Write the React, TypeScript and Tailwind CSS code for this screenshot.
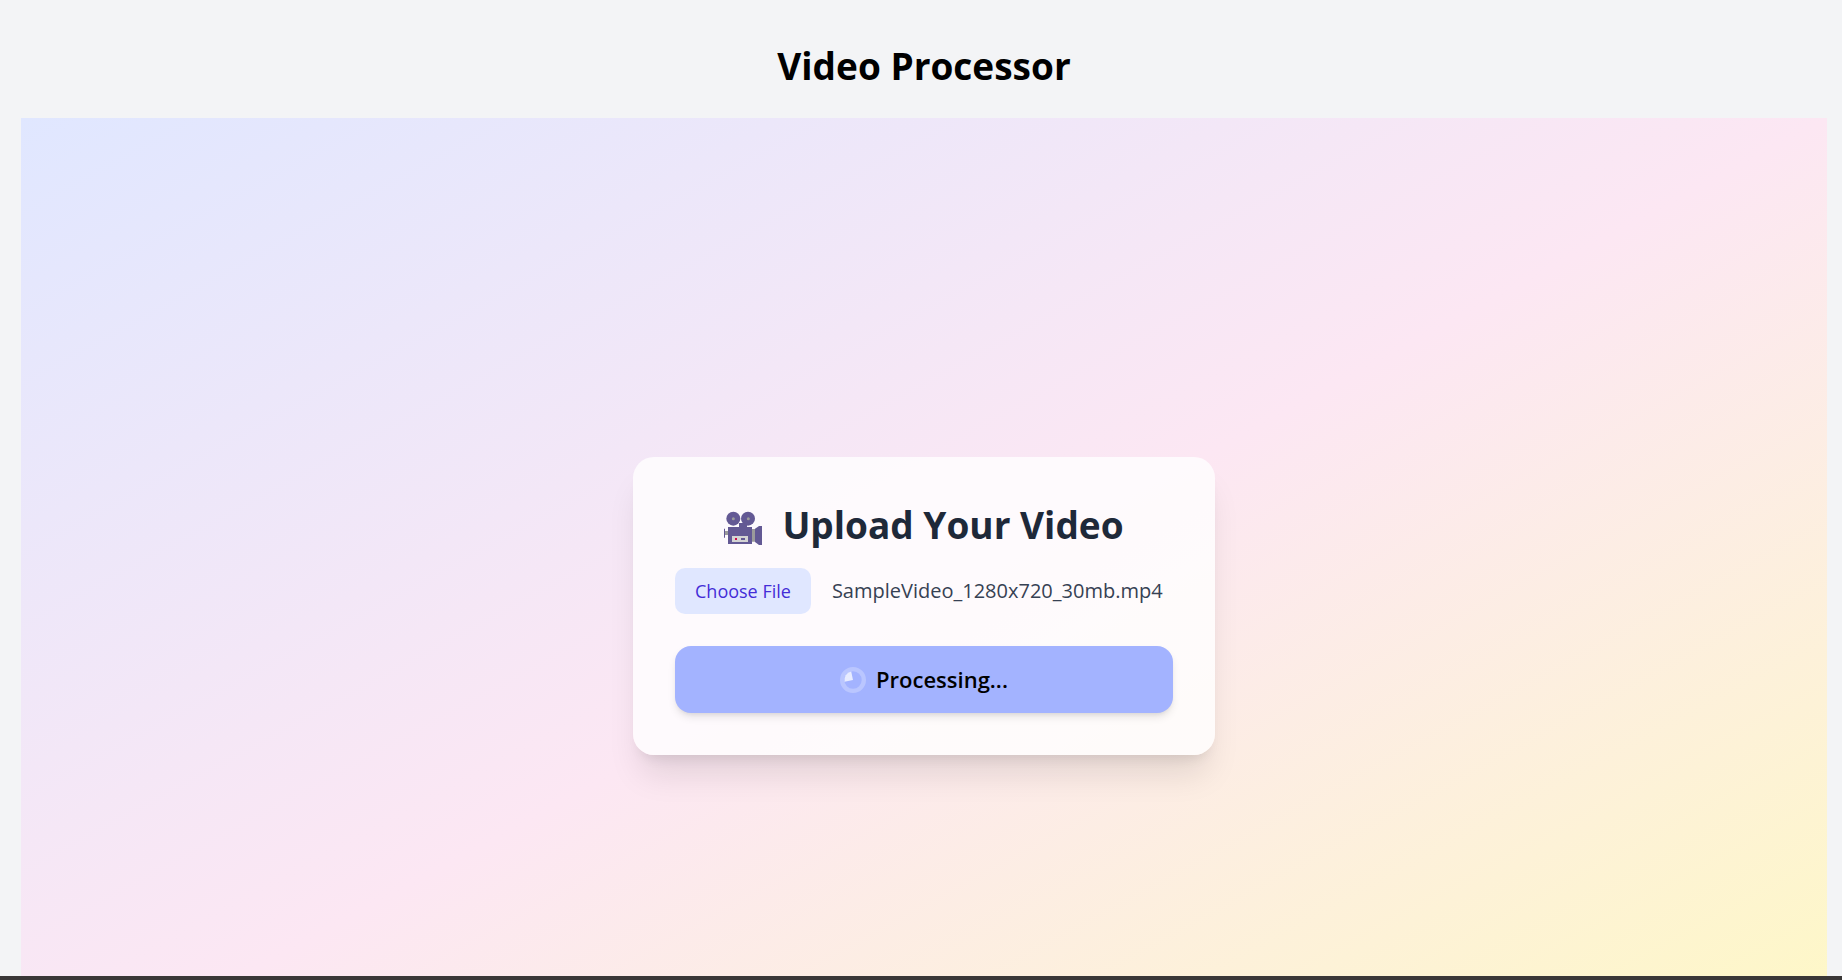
function CameraIcon() {
  return (
    <svg viewBox="0 0 114 105" className="mb-1 h-[35px] w-[38px] shrink-0" aria-hidden="true">
      <g fill="#635994">
        <circle cx="28" cy="23" r="21" />
        <circle cx="72" cy="23" r="21" />
        <path d="M12 48h33V36h24v12h15v51H12z" />
        <path d="M93 53l9-6 3-2h9v57h-9l-12-9z" />
        <path d="M0 53h3v27H0z" />
      </g>
      <g fill="#9b9b9b">
        <path d="M3 60h9v12H3zM84 54h9v38h-9z" />
        <circle cx="28" cy="23" r="4.5" />
        <circle cx="73" cy="23" r="4.5" />
      </g>
      <path d="M24 75h48v18H24z" fill="#d3d3d3" />
      <path d="M33 81h6v6h-6z" fill="#ca0b4a" />
      <path d="M51 81h12v6H51z" fill="#635994" />
    </svg>
  );
}

function Spinner() {
  return (
    <svg viewBox="0 0 24 24" fill="none" className="size-[26px] shrink-0 text-white" aria-hidden="true">
      <circle cx="12" cy="12" r="10" stroke="currentColor" strokeWidth="4" opacity="0.25" />
      <path d="M4 12a8 8 0 018-8v8H4z" fill="currentColor" opacity="0.75" transform="rotate(-12 12 12)" />
    </svg>
  );
}

function UploadCard() {
  return (
    <form
      onSubmit={(e) => e.preventDefault()}
      className="w-full max-w-[582px] rounded-[21px] bg-white/80 p-[42px] shadow-[0_26px_33px_-7px_rgba(0,0,0,0.1),0_10px_13px_-8px_rgba(0,0,0,0.1)]"
    >
      <h2 className="mb-[18px] flex items-end justify-center gap-5 text-[37px] leading-[51px] font-bold text-[#1e2939]">
        <CameraIcon />
        Upload Your Video
      </h2>
      <div className="flex items-center gap-[21px]">
        <input id="video" type="file" accept="video/*" className="peer sr-only" />
        <label
          htmlFor="video"
          className="cursor-pointer rounded-[10px] bg-[#e0e7ff] px-5 py-[10px] text-[18px] leading-[26px] font-medium whitespace-nowrap text-[#432dd7]"
        >
          Choose File
        </label>
        <span className="truncate text-[20px] leading-[26px] text-[#364153]">SampleVideo_1280x720_30mb.mp4</span>
      </div>
      <button
        type="submit"
        disabled
        className="mt-8 flex h-[67px] w-full items-center justify-center gap-[10px] rounded-2xl bg-[#a3b3ff] text-[22px] font-semibold text-black shadow-[0_5px_8px_-1px_rgba(0,0,0,0.1),0_3px_5px_-3px_rgba(0,0,0,0.1)]"
      >
        <Spinner />
        Processing...
      </button>
    </form>
  );
}

export default function App() {
  return (
    <div className="flex h-screen flex-col bg-[#f3f4f6] font-['Open_Sans','Noto_Sans',sans-serif]">
      <main className="min-h-0 flex-1 overflow-hidden pr-[15px] pl-[21px]">
        <h1 className="pt-[42px] pb-[29px] text-center text-[37px] leading-[47px] font-bold text-black">
          Video Processor
        </h1>
        <section className="flex min-h-[calc(100vh-4px)] items-center justify-center bg-linear-to-br from-[#e0e7ff] via-[#fce7f3] to-[#fef9c2]">
          <UploadCard />
        </section>
      </main>
      <footer className="h-1 shrink-0 bg-[#3a3737]" />
    </div>
  );
}
